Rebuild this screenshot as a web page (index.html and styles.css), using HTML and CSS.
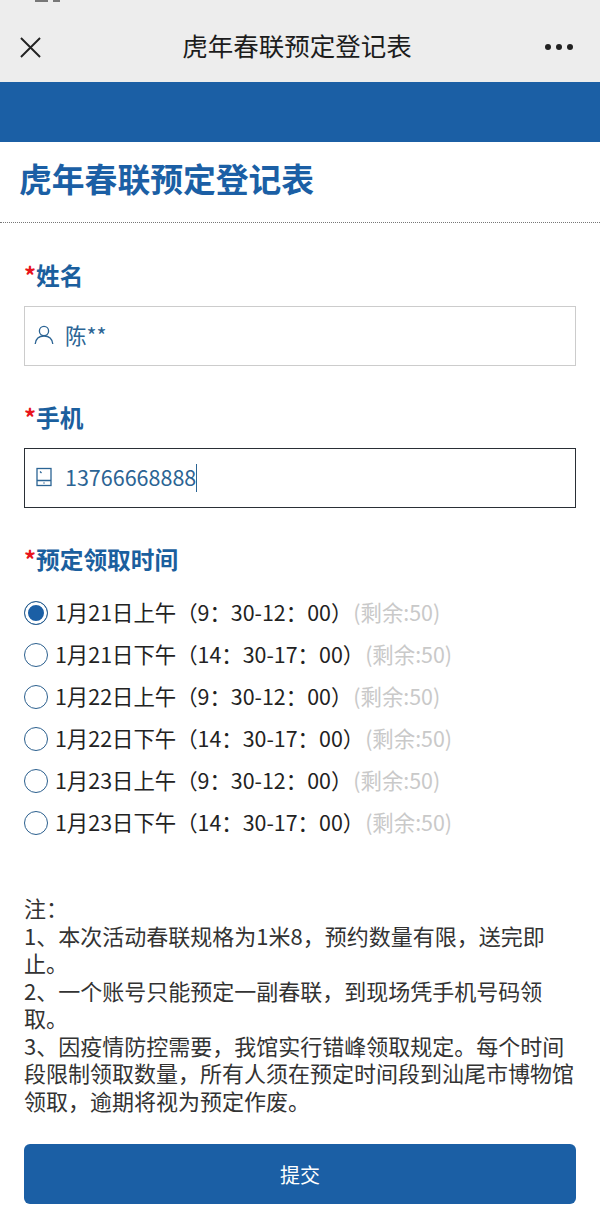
FILE: index.html
```html
<!DOCTYPE html>
<html lang="zh-CN">
<head>
  <meta charset="UTF-8">
  <meta name="viewport" content="width=device-width, initial-scale=1.0">
  <title>虎年春联预定登记表</title>
  <link rel="stylesheet" href="styles.css">
</head>
<body>
  <div class="status-mark"></div>
  <div class="navbar">
    <svg class="nav-close" viewBox="0 0 22 22"><path d="M1 1 L21 21 M21 1 L1 21"/></svg>
    <div class="nav-title">虎年春联预定登记表</div>
    <div class="nav-more"><span></span><span></span><span></span></div>
  </div>
  <div class="banner"></div>
  <div class="form-head">
    <h1>虎年春联预定登记表</h1>
  </div>
  <form class="form">
    <div class="field">
      <div class="label"><span class="star">*</span>姓名</div>
      <div class="input">
        <svg class="input-icon" viewBox="0 0 20 20"><circle cx="10" cy="6" r="4.6"/><path d="M1.2 19 C1.8 13.6 5.4 11 10 11 C14.6 11 18.2 13.6 18.8 19"/></svg>
        <span class="value">陈**</span>
      </div>
    </div>
    <div class="field">
      <div class="label"><span class="star">*</span>手机</div>
      <div class="input input-focus">
        <svg class="input-icon" viewBox="0 0 20 20"><rect x="3" y="1.5" width="14" height="17"/><path d="M3 13.5 H17 M6 4.5 L7.5 6 M9.5 16 H10.5"/></svg>
        <span class="value">13766668888</span><span class="caret"></span>
      </div>
    </div>
    <div class="field">
      <div class="label"><span class="star">*</span>预定领取时间</div>
      <div class="options">
        <div class="option"><span class="radio radio-on"></span><span class="option-text">1月21日上午（9：30-12：00）<span class="left">(剩余:50)</span></span></div>
        <div class="option"><span class="radio"></span><span class="option-text">1月21日下午（14：30-17：00）<span class="left">(剩余:50)</span></span></div>
        <div class="option"><span class="radio"></span><span class="option-text">1月22日上午（9：30-12：00）<span class="left">(剩余:50)</span></span></div>
        <div class="option"><span class="radio"></span><span class="option-text">1月22日下午（14：30-17：00）<span class="left">(剩余:50)</span></span></div>
        <div class="option"><span class="radio"></span><span class="option-text">1月23日上午（9：30-12：00）<span class="left">(剩余:50)</span></span></div>
        <div class="option"><span class="radio"></span><span class="option-text">1月23日下午（14：30-17：00）<span class="left">(剩余:50)</span></span></div>
      </div>
    </div>
    <div class="notes">
      注：<br>
      1、本次活动春联规格为1米8，预约数量有限，送完即止。<br>
      2、一个账号只能预定一副春联，到现场凭手机号码领取。<br>
      3、因疫情防控需要，我馆实行错峰领取规定。每个时间段限制领取数量，所有人须在预定时间段到汕尾市博物馆领取，逾期将视为预定作废。
    </div>
    <div class="submit-button">提交</div>
  </form>
</body>
</html>
```
FILE: styles.css
```css
body {
  margin: 0;
  background-color: #fff;
  font-family: "Noto Sans CJK SC", Roboto, sans-serif;
  color: #222;
  position: relative;
}
.status-mark {
  position: absolute;
  top: 0;
  left: 35px;
  width: 25px;
  height: 2px;
  background: linear-gradient(to right, #777 0, #777 13px, transparent 13px, transparent 18px, #777 18px);
}
.navbar {
  height: 82px;
  box-sizing: border-box;
  padding: 12px 20px 0;
  background-color: #ededed;
  display: flex;
  align-items: center;
  justify-content: space-between;
}
.nav-close {
  width: 21px;
  height: 21px;
  fill: none;
  stroke: #222;
  stroke-width: 2;
}
.nav-title {
  font-size: 25.5px;
  color: #1c1c1c;
  margin: 0 0 6px 8px;
}
.nav-more {
  display: flex;
  gap: 5px;
  padding-right: 7px;
}
.nav-more span {
  width: 6px;
  height: 6px;
  border-radius: 50%;
  background-color: #222;
}
.banner {
  height: 60px;
  background-color: #1b5fa5;
}
.form-head {
  height: 81px;
  box-sizing: border-box;
  padding-left: 19px;
  display: flex;
  align-items: center;
  border-bottom: 1px dotted #777;
}
h1 {
  margin: 0 0 9px;
  font-size: 32.8px;
  font-weight: 700;
  color: #1b5fa5;
}
.form {
  padding: 1px 24px 0;
}
.field {
  padding-top: 30px;
}
.label {
  font-size: 23.7px;
  line-height: 38px;
  font-weight: 700;
  color: #1b5f9e;
  padding-top: 2px;
  margin-bottom: 12px;
}
.star {
  color: #e8141b;
}
.input {
  height: 60px;
  box-sizing: border-box;
  border: 1px solid #ccc;
  padding-left: 9px;
  display: flex;
  align-items: center;
  color: #2b6494;
  font-size: 21.5px;
}
.input-focus {
  border-color: #2a2f36;
}
.input-icon {
  width: 20px;
  height: 20px;
  margin: 0 11px 3px 0;
  fill: none;
  stroke: #2b6494;
  stroke-width: 1.3;
}
.value {
  margin-bottom: 3px;
}
.caret {
  width: 1px;
  height: 28px;
  background-color: #2b6494;
}
.options {
  padding-top: 2px;
}
.option {
  height: 42px;
  display: flex;
  align-items: center;
  font-size: 21.4px;
  white-space: nowrap;
}
.option-text {
  margin-bottom: 4px;
}
.radio {
  width: 22px;
  height: 22px;
  border: 1px solid #2b5f8e;
  border-radius: 50%;
  margin-right: 7px;
  background-color: #fff;
  flex: none;
}
.radio-on {
  background-color: #1b5fa5;
  box-shadow: inset 0 0 0 3px #fff;
}
.left {
  color: #c9c9c9;
  margin-left: 1px;
}
.notes {
  margin-top: 50px;
  font-size: 22px;
  line-height: 27.5px;
  color: #333;
}
.submit-button {
  margin-top: 30px;
  height: 60px;
  border-radius: 6px;
  background-color: #1b5fa5;
  color: #fff;
  font-size: 20px;
  display: flex;
  align-items: center;
  justify-content: center;
}
```
